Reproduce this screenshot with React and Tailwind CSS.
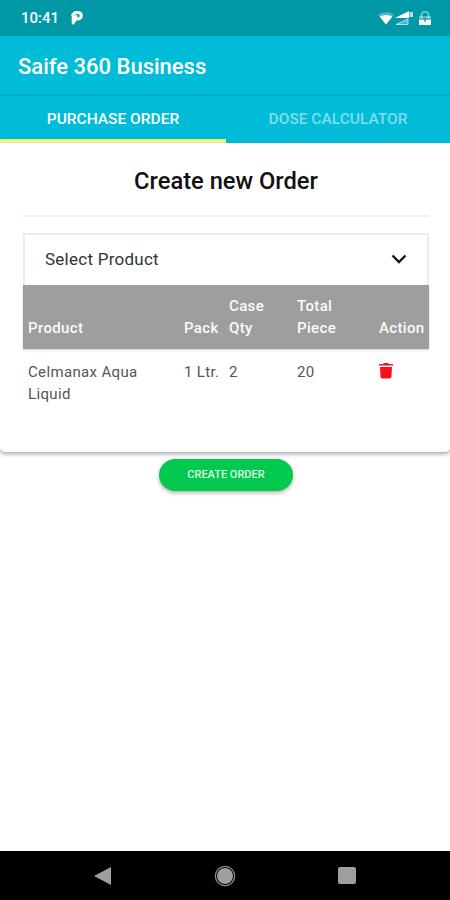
function StatusBar() {
  return (
    <div className="flex h-9 shrink-0 items-center justify-between bg-[#0097a7] pl-[21px] pr-[19px] text-white">
      <div className="flex items-center">
        <span className="w-[38px] whitespace-nowrap text-[15px] font-medium leading-5">10:41</span>
        <svg className="ml-[12px]" width="12" height="14" viewBox="0 0 12 14">
          <path d="M2.200 12V5.500M1.800 4C3 1.500 6 1.300 8 1.800c3 .8 3 5 0 6C6.500 8.300 5.500 8 4.800 7.500M5 5.500L3.500 10" fill="none" stroke="white" strokeWidth="3" strokeLinecap="round" strokeLinejoin="round" />
        </svg>
      </div>
      <div className="flex items-center">
        <svg width="16" height="13" viewBox="0 0 16 13">
          <path d="M0 2.500Q8-2 16 2.500L8 12.500Z" fill="white" fillOpacity=".3" />
          <path d="M1.500 4.500Q8 1.500 14.500 4.500L8 12.500Z" fill="white" />
        </svg>
        <svg className="ml-px" width="20" height="15" viewBox="0 0 20 15">
          <path d="M0 7L14 0V7Z" fill="white" />
          <path d="M1 13.500L13 8V13.500Z" fill="white" fillOpacity=".3" stroke="white" strokeOpacity=".65" />
          <path d="M14.500 1H18V6H14.500Z" fill="white" fillOpacity=".7" />
        </svg>
        <svg className="ml-[4px]" width="12" height="15" viewBox="0 0 12 15">
          <path d="M2.500 7V4a3.500 3.200 0 0 1 7 0v3" fill="none" stroke="white" strokeOpacity=".45" strokeWidth="2" />
          <path d="M0 5H12V9H0Z" fill="white" fillOpacity=".35" />
          <path d="M0 9H12V14H0Z" fill="white" />
          <path d="M6 7v4" stroke="#0097a7" strokeWidth="1.300" />
        </svg>
      </div>
    </div>
  );
}

function Tabs() {
  return (
    <div className="flex h-[49px] shrink-0 border-t-2 border-[#00acc4] bg-[#00bcd9] text-[15.500px] font-medium leading-5">
      <button className="flex w-[226px] items-center justify-center border-b-4 border-[#f3fa8a] pt-[3px] text-white">
        PURCHASE ORDER
      </button>
      <button className="flex flex-1 items-center justify-center pb-px text-[#80deec]">
        DOSE CALCULATOR
      </button>
    </div>
  );
}

function OrderTable() {
  return (
    <table className="w-full table-fixed text-left text-[15px] leading-[22px] tracking-[0.35px]">
      <colgroup>
        <col className="w-[156px]" />
        <col className="w-[45px]" />
        <col className="w-[68px]" />
        <col className="w-[82px]" />
        <col />
      </colgroup>
      <thead className="bg-[#9e9e9e] text-[#fafafa] shadow-[0_1px_2px_rgba(0,0,0,0.2)]">
        <tr className="h-16 align-bottom">
          <th className="pb-[10px] pl-[5px] font-medium">Product</th>
          <th className="pb-[10px] pl-[5px] font-medium">Pack</th>
          <th className="pb-[10px] pl-[5px] font-medium">Case<br />Qty</th>
          <th className="pb-[10px] pl-[5px] font-medium">Total<br />Piece</th>
          <th className="pb-[10px] pl-[5px] font-medium">Action</th>
        </tr>
      </thead>
      <tbody className="text-[#555]">
        <tr className="align-top">
          <td className="pl-[5px] pt-[12px]">Celmanax Aqua<br />Liquid</td>
          <td className="whitespace-nowrap pl-[5px] pt-[12px]">1 Ltr.</td>
          <td className="pl-[5px] pt-[12px]">2</td>
          <td className="pl-[5px] pt-[12px]">20</td>
          <td className="pl-[5px] pt-[14px]">
            <svg width="14" height="16" viewBox="0 0 14 16">
              <path d="M0 1H4L5 0H9L10 1H14V2.500H0Z" fill="#ff0c20" />
              <path d="M1 4H13L12.500 13.500Q12.300 15.500 10.500 15.500H3.500Q1.700 15.500 1.500 13.500Z" fill="#ff0c20" />
            </svg>
          </td>
        </tr>
      </tbody>
    </table>
  );
}

export default function App() {
  return (
    <div className="flex h-[900px] w-[450px] flex-col overflow-hidden bg-white font-[Roboto,sans-serif]">
      <StatusBar />
      <header className="flex h-[58px] shrink-0 items-center bg-[#00bcd9] pl-[18px] pt-[3px] text-[22px] font-medium text-white">
        Saife 360 Business
      </header>
      <Tabs />
      <main className="flex flex-1 flex-col items-center">
        <section className="h-[309px] w-full rounded-b-[5px] bg-white pl-[23px] pr-[21px] shadow-[0_2px_4px_rgba(0,0,0,0.35)]">
          <h1 className="flex h-[74px] items-center justify-center border-b-2 border-[#f1f1f1] pt-[6px] text-[23.700px] font-medium text-[#111]">
            Create new Order
          </h1>
          <button className="mt-4 flex h-[52px] w-full items-center justify-between border-2 border-b-0 border-[#ececec] pb-px pl-[20px] pr-[20px] text-[17px] tracking-[0.25px] text-[#333]">
            Select Product
            <svg className="mb-px" width="16" height="10" viewBox="0 0 16 10">
              <path d="M1.500 1.500L8 8L14.500 1.500" fill="none" stroke="#111" strokeWidth="2.300" />
            </svg>
          </button>
          <OrderTable />
        </section>
        <button className="ml-[2px] mt-[7px] flex h-8 w-[134px] items-center justify-center rounded-full bg-[#03c94f] text-[11px] font-medium text-[#d9ffe6] shadow-[0_2px_4px_rgba(0,0,0,0.3)]">
          CREATE ORDER
        </button>
      </main>
      <nav className="flex h-[49px] shrink-0 items-center bg-black">
        <svg className="ml-[94px]" width="17" height="18" viewBox="0 0 17 18">
          <path d="M0 9L17 0V18Z" fill="#9e9e9e" />
        </svg>
        <svg className="ml-[103px]" width="22" height="22" viewBox="0 0 22 22">
          <circle cx="11" cy="11" r="9.700" fill="none" stroke="#888" strokeWidth="1.300" />
          <circle cx="11" cy="11" r="8" fill="#9e9e9e" />
        </svg>
        <div className="ml-[102px] h-[17px] w-[18px] rounded-[2px] bg-[#9e9e9e]" />
      </nav>
    </div>
  );
}
